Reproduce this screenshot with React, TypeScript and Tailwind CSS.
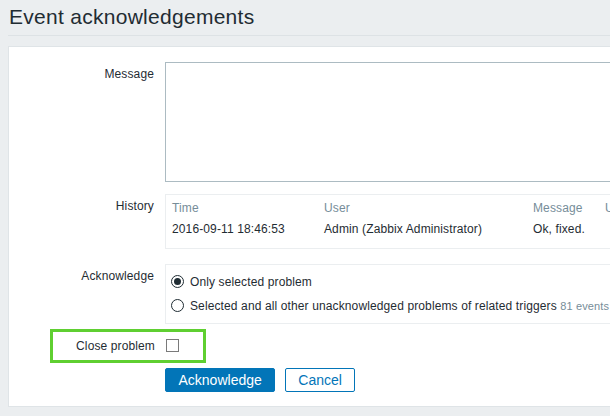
export default function App() {
  return (
    <div className="relative w-[610px] h-[416px] overflow-hidden bg-[#ebeef0] pl-2 text-[12px] leading-[14px] tracking-[0.12px] text-[#1f2c33] font-['Liberation_Sans',Arial,sans-serif]">
      <div className="pt-[5px] pb-[6px] border-b border-[#dde2e5]">
        <h1 className="text-[21px] leading-[24px] font-normal tracking-[0.28px] pl-px">Event acknowledgements</h1>
      </div>
      <div className="mt-[10px] w-[640px] bg-white border border-[#dfe4e7] pb-[14px]">
        <div className="flex mt-[15px]">
          <div className="w-[145px] shrink-0 text-right pt-[4.5px]">Message</div>
          <div className="ml-[11px] w-[470px] h-[120px] border border-[#acbbc2] bg-white" />
        </div>
        <div className="flex mt-[12px]">
          <div className="w-[145px] shrink-0 text-right pt-[4.5px]">History</div>
          <div className="ml-[11px] w-[470px] h-[55px] border border-[#ebeef0] pt-[6px] whitespace-nowrap">
            <div className="flex text-[#768d99]">
              <div className="w-[152px] pl-[6px] shrink-0">Time</div>
              <div className="w-[209px] pl-[6px] shrink-0">User</div>
              <div className="w-[72px] pl-[6px] shrink-0">Message</div>
              <div className="pl-[6px] shrink-0">User action</div>
            </div>
            <div className="flex mt-[7px]">
              <div className="w-[152px] pl-[6px] shrink-0">2016-09-11 18:46:53</div>
              <div className="w-[209px] pl-[6px] shrink-0">Admin (Zabbix Administrator)</div>
              <div className="w-[72px] pl-[6px] shrink-0">Ok, fixed.</div>
              <div className="pl-[6px] shrink-0"></div>
            </div>
          </div>
        </div>
        <div className="flex mt-[15px]">
          <div className="w-[145px] shrink-0 text-right pt-[4.5px]">Acknowledge</div>
          <div className="ml-[11px] w-[470px] h-[60px] border border-[#ebeef0] pt-[9.5px] pl-[5px] whitespace-nowrap">
            <div className="flex items-center h-[14px]">
              <div className="w-[13px] h-[13px] rounded-full border border-[#1f2c33] flex items-center justify-center shrink-0">
                <div className="w-[7px] h-[7px] rounded-full bg-[#1f2c33]" />
              </div>
              <span className="ml-[6px]">Only selected problem</span>
            </div>
            <div className="flex items-center h-[14px] mt-[10px]">
              <div className="w-[13px] h-[13px] rounded-full border border-[#1f2c33] shrink-0" />
              <span className="ml-[6px]">
                Selected and all other unacknowledged problems of related triggers{" "}
                <span className="text-[11px] text-[#768d99]">81 events</span>
              </span>
            </div>
          </div>
        </div>
        <div className="flex mt-[10px] h-[19px]">
          <div className="w-[146px] shrink-0 text-right pt-[4.5px]">Close problem</div>
          <div className="ml-[11px] mt-[5px] w-[13px] h-[13px] border border-[#7a7a7a] bg-white" />
        </div>
        <div className="flex mt-[15px] pl-[156px] gap-[10px]">
          <button className="h-[24px] px-[12.5px] border border-[#0275b8] bg-[#0275b8] text-white text-[14px] leading-[16px] tracking-normal rounded-[2px]">
            Acknowledge
          </button>
          <button className="h-[24px] px-3 border border-[#0275b8] bg-white text-[#0275b8] text-[14px] leading-[16px] tracking-normal rounded-[2px]">
            Cancel
          </button>
        </div>
      </div>
      <div className="absolute left-[50px] top-[329px] w-[156px] h-[34px] border-[3px] border-[#5fcf31]" />
    </div>
  );
}
